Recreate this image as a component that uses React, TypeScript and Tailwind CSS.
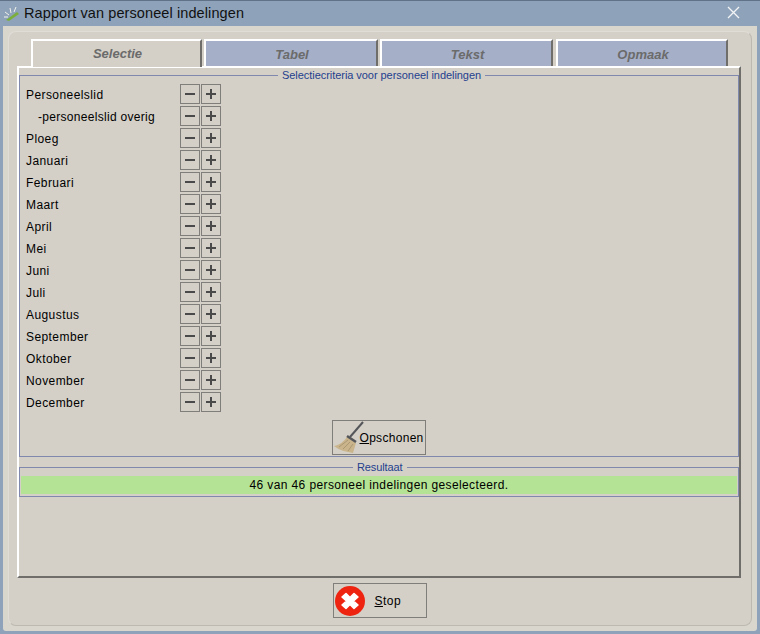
import React from 'react';

const months = [
  'Personeelslid',
  '-personeelslid overig',
  'Ploeg',
  'Januari',
  'Februari',
  'Maart',
  'April',
  'Mei',
  'Juni',
  'Juli',
  'Augustus',
  'September',
  'Oktober',
  'November',
  'December',
];

const tabs = [
  { label: 'Tabel', width: 'w-[174px]' },
  { label: 'Tekst', width: 'w-[173px]' },
  { label: 'Opmaak', width: 'w-[172px] ml-[1px]' },
];

const Broom = () => (
  <svg width="32" height="33" viewBox="0 0 32 33" className="shrink-0">
    <path d="M29 1 L16 16" stroke="#55565a" strokeWidth="2" />
    <path d="M0 25 C6 24 10 20 13 16 L22 22 C21 25 20 29 19 32 C12 31 5 29 0 25 Z" fill="#c9b48c" />
    <path d="M13 15 L22 21" stroke="#55565a" strokeWidth="2.5" />
    <path d="M5 26 L14 19 M9 28 L16 21 M14 30 L19 23" stroke="#ab9873" strokeWidth="1" />
  </svg>
);

const StopIcon = () => (
  <svg width="30" height="30" viewBox="0 0 30 30" className="shrink-0">
    <circle cx="15" cy="15" r="15" fill="#ee2411" />
    <path d="M15 11.5 L19 7.5 L23 11 L18.5 15 L23 19 L19 22.5 L15 18.5 L11 22.5 L7 19 L11.5 15 L7 11 L11 7.5 Z" fill="#ffffff" stroke="#ffffff" strokeWidth="1.5" strokeLinejoin="round" />
  </svg>
);

const StepButton = ({ plus }: { plus?: boolean }) => (
  <button className="relative w-5 h-5 border border-[#7f7e7a] bg-[#d4d0c8]">
    <span className="absolute left-[4px] w-[10px] top-[8px] h-[2px] bg-[#4a4a4a]" />
    {plus && <span className="absolute top-[4px] h-[10px] left-[8px] w-[2px] bg-[#4a4a4a]" />}
  </button>
);

export default function App() {
  return (
    <div className="w-[760px] h-[634px] bg-[#8ea3ba] flex flex-col font-['Liberation_Sans',Arial,sans-serif] text-[12px] text-black overflow-hidden">
      {/* Title bar */}
      <div className="h-[26px] shrink-0 flex items-center pl-[3px] pr-[20px] pt-[1px] border-t border-[#5f7288]">
        <svg width="18" height="16" viewBox="0 0 18 16" className="shrink-0">
          <path d="M3 14 L14 6 L16 8 L6 15 Z" fill="#7cae3c" />
          <path d="M2 6 L6 9 M7 2 L8 7 M13 1 L11 6 M1 11 L5 11" stroke="#f2f2ea" strokeWidth="1" />
        </svg>
        <span className="ml-[3px] text-[14.5px] tracking-[0.1px] text-[#111]">Rapport van personeel indelingen</span>
        <svg width="13" height="13" viewBox="0 0 13 13" className="ml-auto -mt-[4px]">
          <path d="M1 1 L12 12 M12 1 L1 12" stroke="#f2f4f6" strokeWidth="1.3" />
        </svg>
      </div>

      {/* Window body */}
      <div className="flex-1 mx-[3px] mb-[3px] bg-[#d9d6ce] rounded-b-[3px] p-[5px] flex">
        <div className="flex-1 bg-[#d4d0c8] rounded-[8px] border border-t-[#e0ddd6] border-l-[#e0ddd6] border-r-[#bdb9b1] border-b-[#bdb9b1] flex flex-col pl-[8px] pr-[10px] pt-[7px]">
          {/* Tabs */}
          <div className="flex h-[27px] shrink-0 pl-[14px] gap-[2px] relative z-10">
            <div className="w-[171px] h-[28px] bg-[#d4d0c8] border-t-2 border-l-2 border-white border-r-2 border-r-[#6f6e6a] flex items-center justify-center font-bold italic text-[13px] text-[#6b6b6b] pl-[2px]">
              Selectie
            </div>
            {tabs.map((tab) => (
              <div
                key={tab.label}
                className={`${tab.width} h-[27px] bg-[#a5afc8] border-t-2 border-l-2 border-white border-r-2 border-r-[#6f6e6a] flex items-center justify-center font-bold italic text-[13px] text-[#6b6b6b] pt-[3px] pl-[2px]`}
              >
                {tab.label}
              </div>
            ))}
          </div>

          {/* Tab panel */}
          <div className="h-[512px] shrink-0 border-t-2 border-l-2 border-white border-r-2 border-r-[#6f6e6a] border-b-2 border-b-[#6f6e6a]">
            <fieldset className="border border-[#8088ad] mt-[1px] h-[388px] px-[5px] flex flex-col">
              <legend className="ml-[253px] px-1 text-[11px] leading-[13px] tracking-[-0.05px] text-[#24408e]">Selectiecriteria voor personeel indelingen</legend>
              <div className="flex flex-col mt-[1px]">
                {months.map((m, i) => (
                  <div key={m} className="h-[22px] flex items-center">
                    <span className={`w-[155px] pt-[2px] ${i === 1 ? 'pl-[13px] tracking-[0.3px]' : 'pl-[1px] tracking-[0.42px]'}`}>{m}</span>
                    <div className="flex gap-[1px]">
                      <StepButton />
                      <StepButton plus />
                    </div>
                  </div>
                ))}
              </div>
              <div className="flex justify-center mt-[7px] pr-[1px]">
                <button className="w-[94px] h-[35px] border border-[#7f7e7a] flex items-center pl-[1px]">
                  <Broom />
                  <span className="-ml-[6px] tracking-[0.3px]"><u>O</u>pschonen</span>
                </button>
              </div>
            </fieldset>

            <fieldset className="border border-[#8088ad] mt-[4px] h-[36px] flex flex-col">
              <legend className="ml-[333px] px-1 text-[11px] leading-[13px] tracking-[-0.1px] text-[#24408e]">Resultaat</legend>
              <div className="mx-[1px] mt-[2px] h-[18px] bg-[#b5e395] flex items-center justify-center tracking-[0.38px]">
                46 van 46 personeel indelingen geselecteerd.
              </div>
            </fieldset>
          </div>

          {/* Stop */}
          <div className="flex justify-center pt-[5px] pl-[1px]">
            <button className="w-[94px] h-[35px] border border-[#7f7e7a] flex items-center pl-[1px]">
              <StopIcon />
              <span className="ml-[10px] tracking-[0.45px]"><u>S</u>top</span>
            </button>
          </div>
        </div>
      </div>
    </div>
  );
}
